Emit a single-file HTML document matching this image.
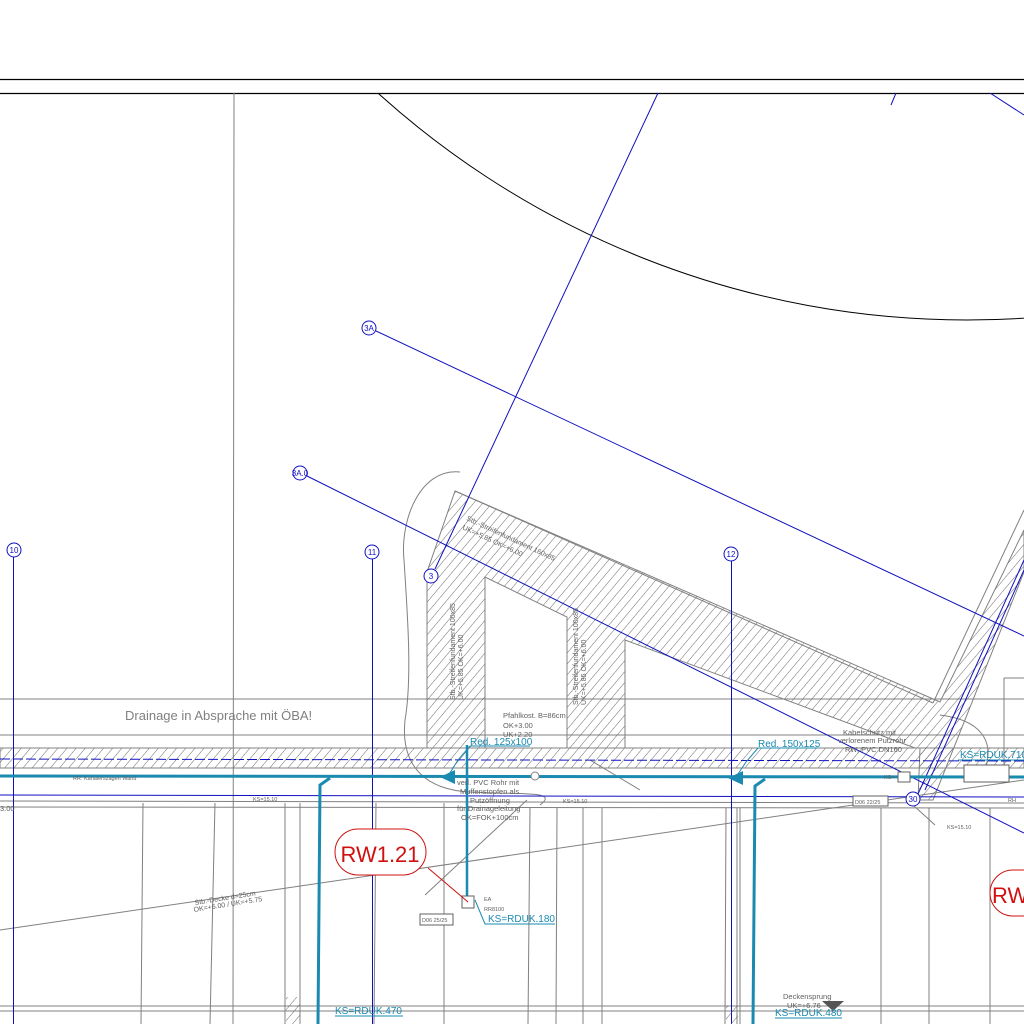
<!DOCTYPE html>
<html><head><meta charset="utf-8"><style>
html,body{margin:0;padding:0;background:#fff;}
svg{display:block;}
text{font-family:"Liberation Sans",sans-serif;}
</style></head><body>
<svg width="1024" height="1024" viewBox="0 0 1024 1024" xmlns="http://www.w3.org/2000/svg">
<defs>
<pattern id="h" width="7" height="7" patternUnits="userSpaceOnUse" patternTransform="rotate(40)">
<line x1="0" y1="0" x2="0" y2="7" stroke="#5a5a5a" stroke-width="0.9"/>
</pattern>
<clipPath id="c"><rect x="0" y="93" width="1024" height="931"/></clipPath>
</defs>
<rect width="1024" height="1024" fill="#fff"/>
<line x1="0" y1="79.5" x2="1024" y2="79.5" stroke="#000" stroke-width="1.2"/>
<line x1="0" y1="93.5" x2="1024" y2="93.5" stroke="#000" stroke-width="1.2"/>
<g clip-path="url(#c)">
<circle cx="967" cy="-558" r="878" fill="none" stroke="#000" stroke-width="1"/>
<line x1="990" y1="93" x2="1024" y2="115" stroke="#1010c0"/>
<line x1="896" y1="93" x2="891" y2="105" stroke="#1010c0"/>
</g>
<g stroke="#808080" stroke-width="1" fill="none">
<line x1="234" y1="93" x2="233" y2="1024"/>
<line x1="0" y1="699" x2="1024" y2="699"/>
<line x1="0" y1="735" x2="1024" y2="735"/>
<line x1="0" y1="801" x2="1024" y2="803"/>
<line x1="0" y1="807" x2="1024" y2="808"/>
<line x1="0" y1="1006" x2="1024" y2="1006"/>
<line x1="0" y1="1011" x2="1024" y2="1011"/>
<line x1="143" y1="803" x2="141" y2="1024"/>
<line x1="215" y1="803" x2="210" y2="1024"/>
<line x1="285" y1="803" x2="285" y2="1024"/>
<line x1="300" y1="803" x2="300" y2="1024"/>
<line x1="376" y1="803" x2="374" y2="1024"/>
<line x1="444" y1="803" x2="444" y2="1024"/>
<line x1="530" y1="808" x2="528" y2="1024"/>
<line x1="557" y1="808" x2="556" y2="1024"/>
<line x1="583" y1="808" x2="583" y2="1024"/>
<line x1="602" y1="808" x2="602" y2="1024"/>
<line x1="726" y1="808" x2="725" y2="1024"/>
<line x1="737" y1="808" x2="737" y2="1024"/>
<line x1="740" y1="808" x2="740" y2="1024"/>
<line x1="881" y1="808" x2="881" y2="1024"/>
<line x1="929" y1="808" x2="929" y2="1024"/>
<line x1="990" y1="808" x2="990" y2="1024"/>
<line x1="1004" y1="678" x2="1004" y2="770"/>
<line x1="1004" y1="678" x2="1024" y2="678"/>
<line x1="0" y1="930" x2="1024" y2="780"/>
<line x1="425" y1="895" x2="527" y2="800"/>
<line x1="640" y1="790" x2="590" y2="760"/>
<path d="M460,472 C420,468 400,520 404,560 C408,620 412,680 405,720 C400,770 430,790 470,792 C520,795 560,790 540,805"/>
<path d="M940,715 C980,720 995,740 985,770"/>
<line x1="913" y1="805" x2="935" y2="825"/>
</g>
<rect x="0" y="748" width="1024" height="20" fill="url(#h)" stroke="#808080" stroke-width="1"/>
<path d="M455,491 L940,702 L1024,530 L1024,572 L933,800 L918,800 L920,748 L427,748 L427,572 Z M485,577 L485,748 L567,748 L567,617 Z M625,640 L625,748 L915,748 Z" fill="url(#h)" fill-rule="evenodd" stroke="#808080" stroke-width="1"/>
<line x1="933" y1="703" x2="1024" y2="510" stroke="#808080"/>
<line x1="455" y1="491" x2="933" y2="703" stroke="#808080"/>
<g stroke="#1010c0" stroke-width="1" fill="none">
<line x1="658" y1="93" x2="435" y2="569"/>
<line x1="376" y1="331" x2="1024" y2="636"/>
<line x1="307" y1="476" x2="1024" y2="833"/>
<line x1="13.5" y1="557" x2="13.5" y2="1024"/>
<line x1="372.5" y1="559" x2="372.5" y2="1024"/>
<line x1="731.5" y1="561" x2="731.5" y2="1024"/>
<line x1="1024" y1="560" x2="918" y2="794"/>
<line x1="1024" y1="570" x2="925" y2="790"/>
<line x1="0" y1="759" x2="1024" y2="761" stroke-dasharray="10,3"/>
<line x1="0" y1="795" x2="1024" y2="797"/>
<line x1="920" y1="776" x2="1024" y2="776"/>
<circle cx="14" cy="550" r="7" fill="#fff"/>
<circle cx="372" cy="552" r="7" fill="#fff"/>
<circle cx="731" cy="554" r="7" fill="#fff"/>
<circle cx="369" cy="328" r="7" fill="#fff"/>
<circle cx="300" cy="473" r="7" fill="#fff"/>
<circle cx="431" cy="576" r="7" fill="#fff"/>
<circle cx="913" cy="799" r="7" fill="#fff"/>
</g>
<g fill="#1010c0" font-size="8" text-anchor="middle">
<text x="14" y="553">10</text><text x="372" y="555">11</text><text x="731" y="557">12</text>
<text x="369" y="331">3A</text><text x="300" y="476">3A.0</text><text x="431" y="579">3</text><text x="913" y="802">30</text>
</g>
<g stroke="#1a8ab0" fill="none">
<line x1="0" y1="776" x2="1024" y2="777" stroke-width="3"/>
<line x1="467" y1="745" x2="467" y2="900" stroke-width="2.5"/>
<path d="M330,778 L320,785 L318,1024" stroke-width="3"/>
<path d="M765,779 L755,786 L753,1024" stroke-width="3"/>
<polyline points="470,746 458,760 448,776" stroke-width="1"/>
<polyline points="758,748 746,762 736,777" stroke-width="1"/>
<line x1="470" y1="746" x2="530" y2="746" stroke-width="1"/>
<line x1="758" y1="748" x2="818" y2="748" stroke-width="1"/>
<line x1="958" y1="760" x2="1024" y2="760" stroke-width="1"/>
<polyline points="475,900 485,924 555,924" stroke-width="1"/>
<polyline points="335,1016 403,1016" stroke-width="1"/>
<polyline points="775,1018 842,1018" stroke-width="1"/>
</g>
<polygon points="440,777 455,770 455,784" fill="#1a8ab0"/>
<polygon points="728,778 743,771 743,785" fill="#1a8ab0"/>
<polygon points="822,1001 844,1001 833,1011" fill="#555"/>
<g fill="#1a8ab0" font-size="10">
<text x="470" y="745">Red. 125x100</text>
<text x="758" y="747">Red. 150x125</text>
<text x="960" y="758">KS=RDUK.710</text>
<text x="488" y="922">KS=RDUK.180</text>
<text x="335" y="1014">KS=RDUK.470</text>
<text x="775" y="1016">KS=RDUK.480</text>
</g>
<text x="125" y="720" font-size="13" fill="#808080">Drainage in Absprache mit ÖBA!</text>
<g fill="#606060" font-size="7.5">
<text x="503" y="718">Pfahlkost. B=86cm</text>
<text x="503" y="728">OK+3.00</text>
<text x="503" y="737">UK+2.20</text>
<text x="457" y="785">verl. PVC Rohr mit</text>
<text x="460" y="794">Muffenstopfen als</text>
<text x="470" y="803">Putzöffnung</text>
<text x="457" y="811">für Drainageleitung</text>
<text x="461" y="820">OK=FOK+100cm</text>
<text x="843" y="735">Kabelschutz mit</text>
<text x="838" y="743">verlorenem Putzrohr</text>
<text x="845" y="752">RW, PVC DN160</text>
<text x="783" y="999">Deckensprung</text>
<text x="787" y="1008">UK=+6.76</text>
<text x="0" y="811">3.00</text>
</g>
<g fill="#606060" font-size="5.5">
<text x="73" y="780">RR: Kanalerszagen Wand</text>
<text x="253" y="801">KS=15.10</text>
<text x="563" y="803">KS=15.10</text>
<text x="947" y="829">KS=15.10</text>
<text x="484" y="901">EA</text>
<text x="484" y="911">RR8100</text>
<text x="967" y="773">WD 632/30</text>
<text x="967" y="779">OK=RDUK.0</text>
<text x="884" y="779">KS=</text>
<text x="1008" y="802">RH</text>
</g>
<g fill="#606060" font-size="7">
<text transform="translate(195,905) rotate(-9)">Stb.-Decke d=25cm</text>
<text transform="translate(194,912) rotate(-9)">OK=+6.00 / UK=+5.75</text>
<text transform="translate(466,520) rotate(25)">Stb.-Streifenfundament 160x85</text>
<text transform="translate(462,529) rotate(25)">UK=+5.85 OK=+6.00</text>
<text transform="translate(455,700) rotate(-90)">Stb.-Streifenfundament 100x85</text>
<text transform="translate(463,700) rotate(-90)">UK=+5.85 OK=+6.00</text>
<text transform="translate(578,705) rotate(-90)">Stb.-Streifenfundament 100x85</text>
<text transform="translate(586,705) rotate(-90)">UK=+5.85 OK=+6.00</text>
</g>
<g fill="#fff" stroke="#606060" stroke-width="1">
<rect x="420" y="914" width="33" height="11"/>
<rect x="853" y="796" width="35" height="10"/>
<rect x="964" y="765" width="45" height="17"/>
<rect x="462" y="896" width="12" height="12"/>
<rect x="898" y="772" width="12" height="10"/>
</g>
<g fill="#606060" font-size="5.5"><text x="422" y="922">D06 25/25</text><text x="855" y="804">D06 22/25</text></g>
<circle cx="535" cy="776" r="4" fill="#fff" stroke="#808080"/>
<path d="M428,868 L468,902" stroke="#d01010" stroke-width="1"/>
<rect x="335" y="829" width="91" height="46" rx="23" fill="#fff" stroke="#d01010" stroke-width="1"/>
<text x="380" y="862" font-size="22" fill="#d01010" text-anchor="middle">RW1.21</text>
<rect x="990" y="870" width="80" height="46" rx="23" fill="#fff" stroke="#d01010" stroke-width="1"/>
<text x="992" y="903" font-size="22" fill="#d01010">RW</text>
<rect x="286" y="997" width="14" height="27" fill="url(#h)"/>
<rect x="726" y="1006" width="12" height="18" fill="url(#h)"/>
</svg>
</body></html>
